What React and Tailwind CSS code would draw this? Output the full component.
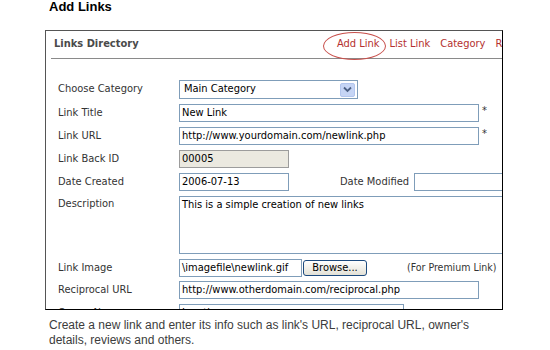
import React from 'react';

const Field = ({ w, gray, children, className = '' }) => (
  <div
    className={`h-[18px] shrink-0 border px-[2px] leading-[16px] whitespace-nowrap overflow-hidden ${
      gray ? 'bg-[#ebe9e0] border-[#9c9c9c]' : 'bg-white border-[#7f9db9]'
    } ${w} ${className}`}
  >
    {children}
  </div>
);

const Row = ({ label, children, className = 'items-center h-[18px]' }) => (
  <div className={`flex ${className}`}>
    <div className="w-[121px] shrink-0 text-[#333]">{label}</div>
    {children}
  </div>
);

const Star = () => <span className="ml-[3px] self-start leading-[14px] text-[#333]">*</span>;

const App = () => {
  return (
    <div className="relative w-[550px] h-[350px] bg-white overflow-hidden font-['Liberation_Sans',Arial,sans-serif]">
      <h1 className="pl-[49px] text-[13px] leading-[14px] font-bold text-black">Add Links</h1>

      {/* panel */}
      <div className="mt-[16px] ml-[45px] w-[458px] h-[280px] border border-[#555] border-r-black border-b-black overflow-hidden font-['DejaVu_Sans_Condensed','Liberation_Sans',sans-serif] text-[11px] text-black">
        <div className="ml-[5px] pl-[3px] h-[28px] flex items-center border-b border-[#8a8a8a] whitespace-nowrap">
          <div className="w-[283px] shrink-0 font-bold text-[11px] text-[#4a4a4a]">Links Directory</div>
          <nav className="flex gap-[10px] text-[#b4302e] text-[11px]">
            <a>Add Link</a>
            <a>List Link</a>
            <a>Category</a>
            <a>Reviews</a>
          </nav>
        </div>

        <div className="pl-[12px] pt-[21px] flex flex-col gap-[5px]">
          <Row label="Choose Category" className="items-center h-[19px]">
            <div className="h-[19px] w-[179px] border border-[#7f9db9] bg-white flex items-center justify-between pl-[4px] pr-[2px]">
              <span>Main Category</span>
              <span className="w-[15px] h-[14px] rounded-[2px] bg-[#c6d5f5] border border-[#b3c6ee] flex items-center justify-center">
                <svg width="9" height="7" viewBox="0 0 9 7">
                  <path d="M1 1.5 L4.5 5 L8 1.5" fill="none" stroke="#4d6185" strokeWidth="1.8" />
                </svg>
              </span>
            </div>
          </Row>
          <Row label="Link Title">
            <Field w="w-[300px]">New Link</Field>
            <Star />
          </Row>
          <Row label="Link URL">
            <Field w="w-[300px]">http://www.yourdomain.com/newlink.php</Field>
            <Star />
          </Row>
          <Row label="Link Back ID">
            <Field w="w-[110px]" gray>00005</Field>
          </Row>
          <Row label="Date Created">
            <Field w="w-[110px]">2006-07-13</Field>
            <div className="ml-[51px] w-[74px] shrink-0 text-[#333]">Date Modified</div>
            <Field w="w-[110px]" />
          </Row>
          <Row label="Description" className="items-start h-[58px]">
            <div className="h-[58px] w-[340px] shrink-0 border border-[#7f9db9] bg-white px-[2px] pt-[1px] leading-[14px]">
              This is a simple creation of new links
            </div>
          </Row>
          <Row label="Link Image" className="items-center h-[18px]">
            <Field w="w-[123px]">\imagefile\newlink.gif</Field>
            <button className="ml-[1px] h-[16px] w-[64px] shrink-0 rounded-[3px] border border-[#1c4a7e] bg-gradient-to-b from-white to-[#e3e1d6] text-[11px] leading-[14px] text-black">
              Browse...
            </button>
            <span className="ml-[40px] text-[#333] text-[10.5px] whitespace-nowrap">(For Premium Link)</span>
          </Row>
          <Row label="Reciprocal URL" className="items-center h-[18px] -mt-[1px]">
            <Field w="w-[300px]">http://www.otherdomain.com/reciprocal.php</Field>
          </Row>
          <Row label="Owner Name">
            <Field w="w-[225px]">Jonathan</Field>
          </Row>
        </div>
      </div>

      <p className="mt-[8px] pl-[49px] text-[12px] leading-[15px] text-[#3c3c3c]">
        Create a new link and enter its info such as link's URL, reciprocal URL, owner's
        <br />
        details, reviews and others.
      </p>

      {/* hand-drawn highlight around the active tab */}
      <div className="absolute left-[323px] top-[32px] w-[63px] h-[28px] rounded-[50%] border-[1.5px] border-[#c8504c]" />
    </div>
  );
};

export default App;
